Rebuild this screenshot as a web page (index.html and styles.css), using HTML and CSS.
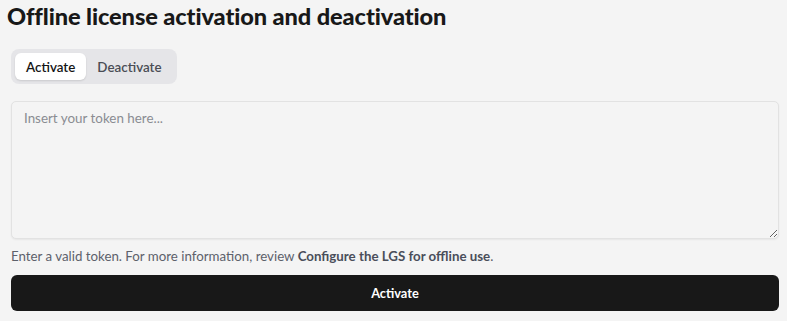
FILE: index.html
```html
<!DOCTYPE html>
<html lang="en">
<head>
<meta charset="utf-8">
<title>Offline license activation and deactivation</title>
<link rel="stylesheet" href="styles.css">
</head>
<body>
<div class="page">
  <h1 class="title">Offline license activation and deactivation</h1>
  <div class="content">
    <div class="tabs" role="tablist">
      <button class="tab tab-active" role="tab">Activate</button>
      <button class="tab" role="tab">Deactivate</button>
    </div>
    <textarea class="token" placeholder="Insert your token here..."></textarea>
    <p class="help">Enter a valid token. For more information, review <a class="help-link" href="#">Configure the LGS for offline use</a>.</p>
    <button class="submit">Activate</button>
  </div>
</div>
</body>
</html>
```
FILE: styles.css
```css
* { box-sizing: border-box; }
html, body { margin: 0; background: #f4f4f4; }
body {
  font-family: Lato, "Noto Sans", sans-serif;
  color: #1b1b1b;
}
.page {
  padding: 1px 8px 0 7px;
}
.title {
  margin: 0;
  font-size: 23.6px;
  line-height: 30px;
  font-weight: 900;
  color: #181818;
  letter-spacing: -0.1px;
}
.content {
  margin-top: 18px;
  margin-left: 4px;
  display: flex;
  flex-direction: column;
}
.tabs {
  align-self: flex-start;
  display: flex;
  padding: 4px;
  background: #e5e5e8;
  border-radius: 8px;
  height: 35px;
}
.tab {
  font-family: inherit;
  border: 0;
  background: transparent;
  font-size: 13.4px;
  font-weight: 600;
  color: #4a4d55;
  padding: 0 11px;
  height: 27px;
  border-radius: 6px;
  cursor: pointer;
}
.tab-active {
  background: #ffffff;
  color: #151515;
  box-shadow: 0 1px 2px rgba(0,0,0,0.12);
}
.token {
  margin-top: 17px;
  height: 138px;
  width: 100%;
  resize: vertical;
  background: #f4f4f4;
  border: 1px solid #e2e2e2;
  border-radius: 5px;
  padding: 8px 12px;
  font-family: inherit;
  font-size: 13.4px;
  color: #222;
  box-shadow: 0 1px 2px rgba(0,0,0,0.06);
}
.token::placeholder { color: #8a8c92; }
.help {
  margin: 7px 0 0;
  font-size: 13.3px;
  line-height: 20px;
  color: #5d616b;
}
.help-link {
  color: #4a4e5a;
  font-weight: 700;
  text-decoration: none;
}
.submit {
  margin-top: 9px;
  height: 36px;
  width: 100%;
  border: 0;
  border-radius: 6px;
  background: #181818;
  color: #ffffff;
  font-family: inherit;
  font-size: 12.8px;
  font-weight: 700;
  cursor: pointer;
}
```
